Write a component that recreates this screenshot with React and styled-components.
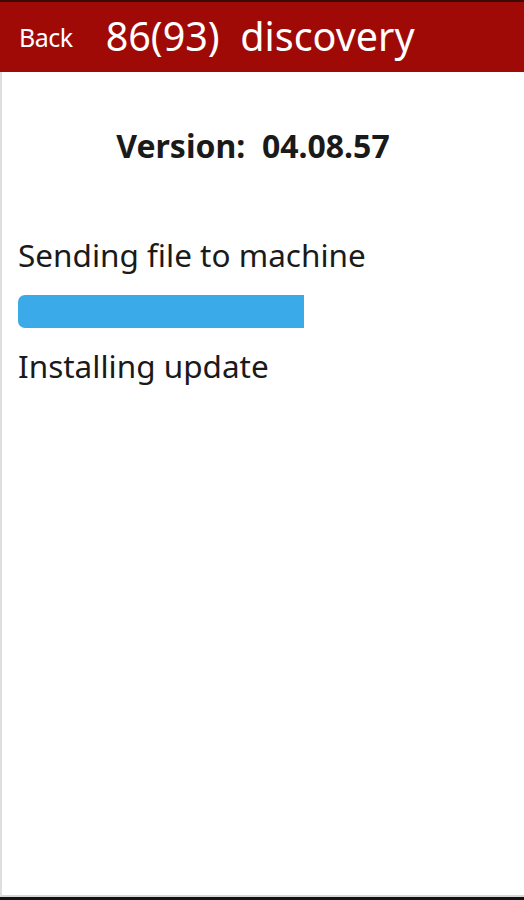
import React from "react";
import styled, { createGlobalStyle } from "styled-components";

const GlobalStyle = createGlobalStyle`
  html, body {
    margin: 0;
    padding: 0;
    background: #ffffff;
  }
  body {
    font-family: "Noto Sans", "Open Sans", sans-serif;
  }
`;

const App = () => {
  const progress = 58.4;

  return (
    <Screen>
      <GlobalStyle />
      <Header>
        <BackButton>Back</BackButton>
        <Title>86(93)&nbsp; discovery</Title>
      </Header>
      <Content>
        <Version>Version:&nbsp; 04.08.57</Version>
        <Step $gap={66}>Sending file to machine</Step>
        <Track>
          <Fill style={{ width: `${progress}%` }} />
        </Track>
        <Step>Installing update</Step>
      </Content>
    </Screen>
  );
};

export default App;

const Screen = styled.div`
  width: 524px;
  height: 900px;
  display: flex;
  flex-direction: column;
  box-sizing: border-box;
  border-bottom: 3px solid #111111;
`;

const Header = styled.div`
  height: 70px;
  flex-shrink: 0;
  display: flex;
  align-items: center;
  gap: 33px;
  padding-left: 19px;
  background: #9f0a07;
  border-top: 2px solid #3a0b08;
  color: #ffffff;
`;

const BackButton = styled.div`
  font-size: 25px;
  letter-spacing: -0.5px;
`;

const Title = styled.div`
  font-size: 39.5px;
  margin-top: -2px;
`;

const Content = styled.div`
  flex: 1;
  display: flex;
  flex-direction: column;
  padding: 0 16px;
  border-left: 2px solid #dedede;
  border-bottom: 2px solid #d6d6d6;
  color: #1a1a1a;
`;

const Version = styled.div`
  align-self: center;
  margin: 52px 0 0 -20px;
  font-size: 32px;
  font-weight: 700;
`;

const Step = styled.div`
  font-size: 31.5px;
  margin-top: ${(p) => (p.$gap ? `${p.$gap}px` : "0")};
`;

const Track = styled.div`
  width: 100%;
  height: 33px;
  margin: 19px 0 16px;
`;

const Fill = styled.div`
  height: 100%;
  background: #3aabe8;
  border-radius: 7px 0 0 7px;
`;
